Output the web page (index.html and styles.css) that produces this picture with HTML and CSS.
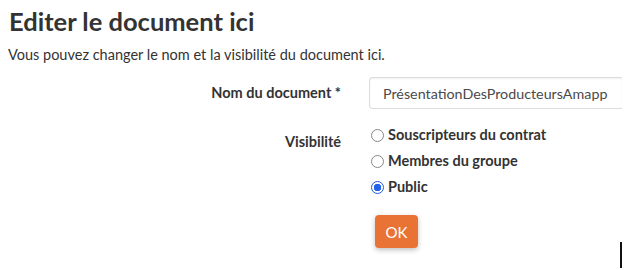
FILE: index.html
```html
<!DOCTYPE html>
<html lang="fr">
<head>
  <meta charset="UTF-8">
  <title>Editer le document</title>
  <link rel="stylesheet" href="styles.css">
</head>
<body>
  <h1>Editer le document ici</h1>
  <p class="intro">Vous pouvez changer le nom et la visibilité du document ici.</p>
  <form class="doc-form">
    <label class="field-label" for="doc-name">Nom du document *</label>
    <div class="field">
      <input id="doc-name" class="text-input" type="text" value="PrésentationDesProducteursAmapp">
    </div>
    <div class="field-label visi-label">Visibilité</div>
    <div class="field radios">
      <label class="radio"><span class="dot"></span>Souscripteurs du contrat</label>
      <label class="radio"><span class="dot"></span>Membres du groupe</label>
      <label class="radio"><span class="dot checked"></span>Public</label>
    </div>
    <div></div>
    <div class="field actions">
      <button type="button" class="btn-ok">OK</button>
      <span class="caret"></span>
    </div>
  </form>
</body>
</html>
```

FILE: styles.css
```css
body {
  font-family: Lato, "Open Sans", sans-serif;
  margin: 0;
  padding: 0 8px;
  background-color: #fff;
  color: #333;
}
h1 {
  font-size: 25.5px;
  font-weight: bold;
  margin: 5px 0 0;
  line-height: 32px;
  padding-left: 1px;
}
.intro {
  font-size: 14.5px;
  margin: 8px 0 0;
  line-height: 20px;
}
.doc-form {
  display: grid;
  grid-template-columns: 333px 1fr;
  column-gap: 28px;
  margin-top: 12px;
}
.field-label {
  text-align: right;
  font-weight: bold;
  font-size: 14.5px;
  line-height: 32px;
}
.visi-label {
  margin-top: 23px;
  line-height: 20px;
}
.text-input {
  box-sizing: border-box;
  width: 253px;
  height: 32px;
  border: 1px solid #ddd;
  border-right: none;
  border-radius: 4px 0 0 4px;
  padding: 0 13px;
  font-family: inherit;
  font-size: 14.3px;
  color: #4a4a4a;
  box-shadow: inset 0 1px 2px rgba(0, 0, 0, 0.06);
}
.radios {
  display: flex;
  flex-direction: column;
  gap: 6px;
  margin-top: 16px;
}
.radio {
  display: flex;
  align-items: center;
  gap: 4px;
  font-weight: bold;
  font-size: 14.5px;
  line-height: 20px;
  margin-left: 2px;
}
.dot {
  box-sizing: border-box;
  width: 13px;
  height: 13px;
  border: 1px solid #888;
  border-radius: 50%;
  background: #fff;
}
.dot.checked {
  border: 1px solid #1f5bd8;
  background: radial-gradient(circle, #2563eb 0 3.5px, #fff 4px);
}
.actions {
  display: flex;
  align-items: flex-start;
  margin-top: 18px;
}
.btn-ok {
  width: 43px;
  height: 33px;
  margin-left: 6px;
  border: none;
  border-radius: 4px;
  background-color: #e97335;
  color: #fff;
  font-family: inherit;
  font-size: 15px;
  box-shadow: 0 2px 5px rgba(0, 0, 0, 0.25);
}
.caret {
  width: 2px;
  height: 26px;
  background: #111;
  margin-left: 202px;
  margin-top: 27px;
}
```
